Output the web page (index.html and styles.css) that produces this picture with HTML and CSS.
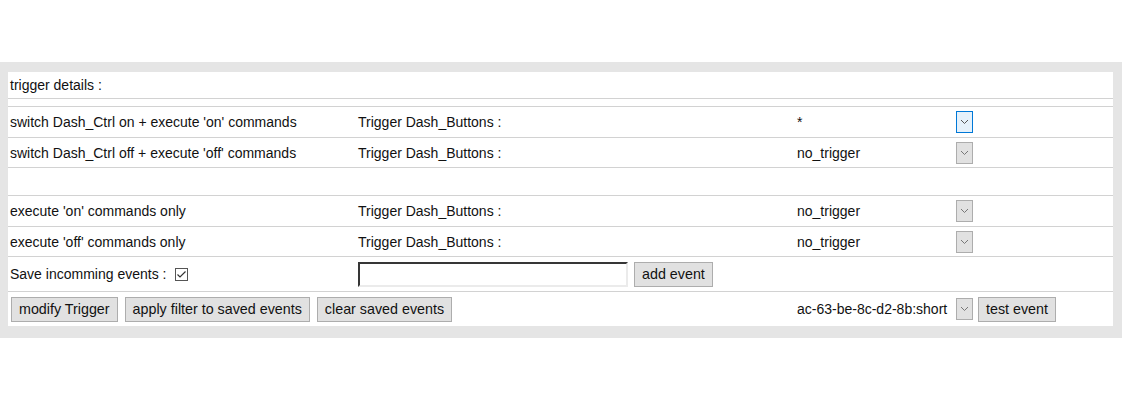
FILE: index.html
```html
<!DOCTYPE html>
<html>
<head>
<meta charset="utf-8">
<link rel="stylesheet" href="styles.css">
</head>
<body>
<div class="top"></div>
<div class="frame">
  <div class="panel">
    <div class="head">trigger details :</div>
    <div class="spacer"></div>

    <div class="row h30">
      <div class="cell">switch Dash_Ctrl on + execute 'on' commands</div>
      <div class="cell">Trigger Dash_Buttons :</div>
      <div class="cell">
        <div class="sel"><span class="val">*</span><span class="arrow focus"><svg width="9" height="6" viewBox="0 0 9 6"><polyline points="1,1 4.5,4.5 8,1" fill="none" stroke="#555" stroke-width="1"/></svg></span></div>
      </div>
    </div>

    <div class="row h29">
      <div class="cell">switch Dash_Ctrl off + execute 'off' commands</div>
      <div class="cell">Trigger Dash_Buttons :</div>
      <div class="cell">
        <div class="sel"><span class="val">no_trigger</span><span class="arrow"><svg width="9" height="6" viewBox="0 0 9 6"><polyline points="1,1 4.5,4.5 8,1" fill="none" stroke="#777" stroke-width="1"/></svg></span></div>
      </div>
    </div>

    <div class="row h27">
      <div class="cell"></div>
      <div class="cell"></div>
      <div class="cell"></div>
    </div>

    <div class="row h30">
      <div class="cell">execute 'on' commands only</div>
      <div class="cell">Trigger Dash_Buttons :</div>
      <div class="cell">
        <div class="sel"><span class="val">no_trigger</span><span class="arrow"><svg width="9" height="6" viewBox="0 0 9 6"><polyline points="1,1 4.5,4.5 8,1" fill="none" stroke="#777" stroke-width="1"/></svg></span></div>
      </div>
    </div>

    <div class="row h29">
      <div class="cell">execute 'off' commands only</div>
      <div class="cell">Trigger Dash_Buttons :</div>
      <div class="cell">
        <div class="sel"><span class="val">no_trigger</span><span class="arrow"><svg width="9" height="6" viewBox="0 0 9 6"><polyline points="1,1 4.5,4.5 8,1" fill="none" stroke="#777" stroke-width="1"/></svg></span></div>
      </div>
    </div>

    <div class="row h34">
      <div class="cell">Save incomming events :<span class="check"><svg width="13" height="13" viewBox="0 0 13 13"><rect x="0.5" y="0.5" width="12" height="12" fill="#fff" stroke="#555"/><polyline points="2.5,6.5 5,9 10.5,3.5" fill="none" stroke="#333" stroke-width="1.2"/></svg></span></div>
      <div class="cell"><span class="input"></span><span class="btn gap6">add event</span></div>
      <div class="cell"></div>
    </div>

    <div class="row h34 last">
      <div class="cell span2 btns">
        <span class="btn">modify Trigger</span>
        <span class="btn">apply filter to saved events</span>
        <span class="btn">clear saved events</span>
      </div>
      <div class="cell">
        <div class="sel"><span class="val">ac-63-be-8c-d2-8b:short</span><span class="arrow"><svg width="9" height="6" viewBox="0 0 9 6"><polyline points="1,1 4.5,4.5 8,1" fill="none" stroke="#777" stroke-width="1"/></svg></span></div>
        <span class="btn gap5">test event</span>
      </div>
    </div>
  </div>
</div>
</body>
</html>
```
FILE: styles.css
```css
html, body {
  margin: 0;
  padding: 0;
  background: #fff;
}
body {
  font-family: "Liberation Sans", Arial, sans-serif;
  font-size: 14px;
  color: #111;
}
.top {
  height: 62px;
}
.frame {
  background: #e5e5e5;
  padding: 10px 9px 12px 8px;
}
.panel {
  background: #fff;
}
.head {
  height: 26px;
  line-height: 26px;
  padding-left: 2px;
  border-bottom: 1px solid #d2d2d2;
}
.spacer {
  height: 7px;
}
.row {
  display: grid;
  grid-template-columns: 348px 439px 1fr;
  border-top: 1px solid #d2d2d2;
}
.h30 { height: 30px; }
.h29 { height: 29px; }
.h27 { height: 27px; }
.h34 { height: 34px; }
.cell {
  display: flex;
  align-items: center;
  padding-left: 2px;
  white-space: nowrap;
}
.span2 {
  grid-column: 1 / 3;
}
.btns {
  padding-left: 3px;
  gap: 7px;
}
.sel {
  width: 176px;
  display: flex;
  align-items: center;
}
.val {
  flex: 1;
}
.arrow {
  box-sizing: border-box;
  width: 17px;
  height: 22px;
  border: 1px solid #adadad;
  background: #e1e1e1;
  display: flex;
  align-items: center;
  justify-content: center;
}
.arrow.focus {
  border-color: #0078d7;
  background: #e5f1fb;
}
.check {
  display: inline-flex;
  margin-left: 9px;
}
.input {
  box-sizing: border-box;
  width: 270px;
  height: 25px;
  border: 2px inset #ebebeb;
  border-top-color: #8a8a8a;
  border-left-color: #8a8a8a;
  background: #fff;
}
.btn {
  box-sizing: border-box;
  height: 25px;
  padding: 0 7px;
  display: inline-flex;
  align-items: center;
  font-size: 14.3px;
  background: #e1e1e1;
  border: 1px solid #adadad;
  color: #111;
}
.gap6 { margin-left: 6px; }
.gap5 { margin-left: 5px; }
```
